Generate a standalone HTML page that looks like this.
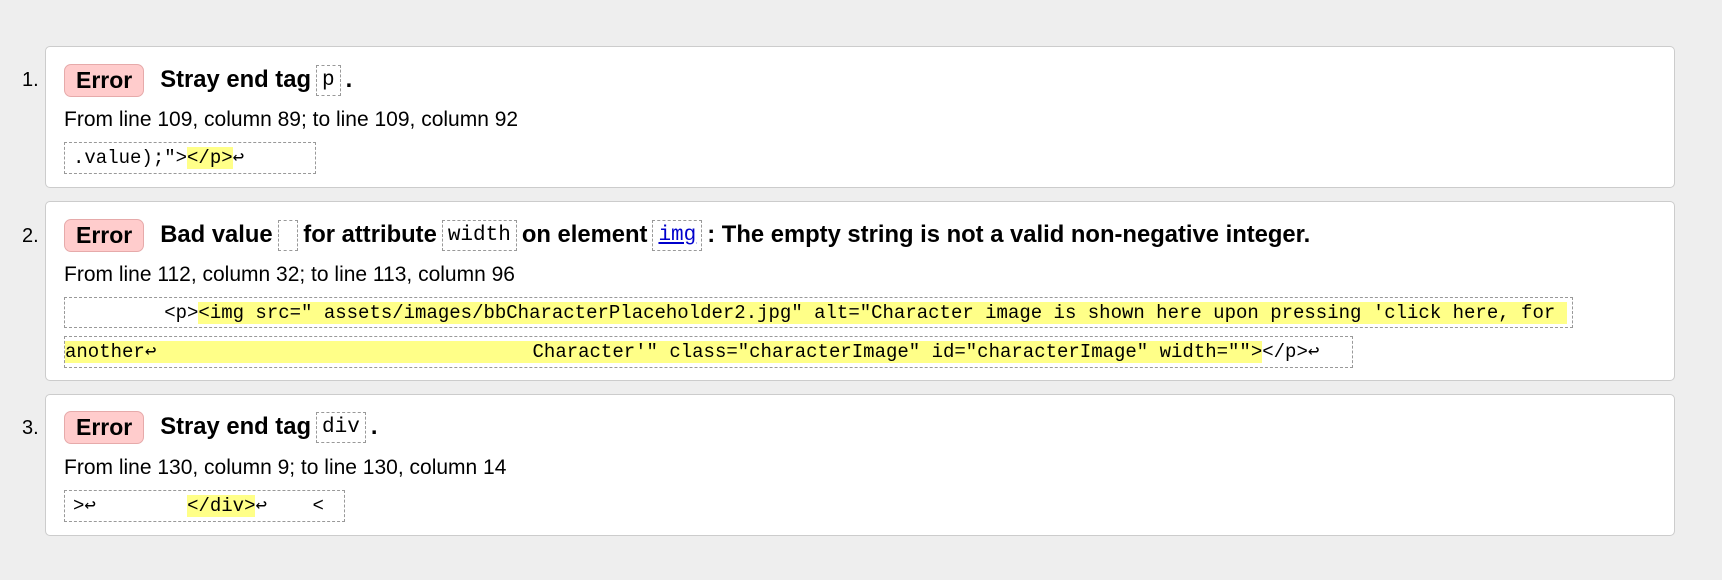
<!DOCTYPE html>
<html><head><meta charset="utf-8"><style>
body{margin:0;background:#eeeeee;width:1722px;height:580px;overflow:hidden;font-family:"Liberation Sans",Arial,sans-serif;color:#000;position:relative}
.card{position:absolute;left:45px;width:1630px;background:#fff;border:1px solid #ccc;border-radius:5px;box-sizing:border-box}
.num{position:absolute;left:22px;font-size:20px}
.h{position:absolute;left:64px;font-size:23.8px;font-weight:bold;white-space:nowrap;display:flex;align-items:center}
.badge{background:#fcc;border:1px solid #e6aaaa;border-radius:7px;padding:2px 11px;margin-right:16px;font-weight:bold;font-size:23px}
.c{font-family:"Liberation Mono",monospace;font-weight:normal;border:1px dashed #999;padding:3px 5px;margin:0 5px;font-size:21px}
.c a{color:#00c}
.from{position:absolute;left:64px;font-size:21px}
.code{position:absolute;left:64px;font-family:"Liberation Mono",monospace;font-size:19px;white-space:pre;border:1px dashed #999;box-sizing:border-box;padding:0 8px 0 8px;line-height:30px}
.y{background:#ff8}
</style></head><body>
<div class="card" style="top:46px;height:142px"></div>
<div class="card" style="top:201px;height:180px"></div>
<div class="card" style="top:394px;height:142px"></div>

<div class="num" style="top:69px">1.</div>
<div class="h" style="top:62px;height:36px"><span class="badge">Error</span>Stray end tag <span class="c">p</span>.</div>
<div class="from" style="top:108px">From line 109, column 89; to line 109, column 92</div>
<div class="code" style="top:142px;width:252px;height:32px">.value);"&gt;<span class="y">&lt;/p&gt;</span>↩</div>

<div class="num" style="top:225px">2.</div>
<div class="h" style="top:217px;height:36px"><span class="badge">Error</span>Bad value <span class="c" style="padding:3px 3px">&nbsp;</span>for attribute <span class="c">width</span> on element <span class="c"><a><u>img</u></a></span>: The empty string is not a valid non-negative integer.</div>
<div class="from" style="top:263px">From line 112, column 32; to line 113, column 96</div>
<div class="code" style="top:297px;width:1509px;height:31px;padding-left:8px">        &lt;p&gt;<span class="y">&lt;img src=" assets/images/bbCharacterPlaceholder2.jpg" alt="Character image is shown here upon pressing 'click here, for </span></div>
<div class="code" style="top:336px;width:1289px;height:32px;padding-left:0"><span class="y">another↩                                 Character'" class="characterImage" id="characterImage" width=""&gt;</span>&lt;/p&gt;↩</div>

<div class="num" style="top:417px">3.</div>
<div class="h" style="top:409px;height:36px"><span class="badge">Error</span>Stray end tag <span class="c">div</span>.</div>
<div class="from" style="top:456px">From line 130, column 9; to line 130, column 14</div>
<div class="code" style="top:490px;width:281px;height:32px">&gt;↩        <span class="y">&lt;/div&gt;</span>↩    &lt;</div>
</body></html>
